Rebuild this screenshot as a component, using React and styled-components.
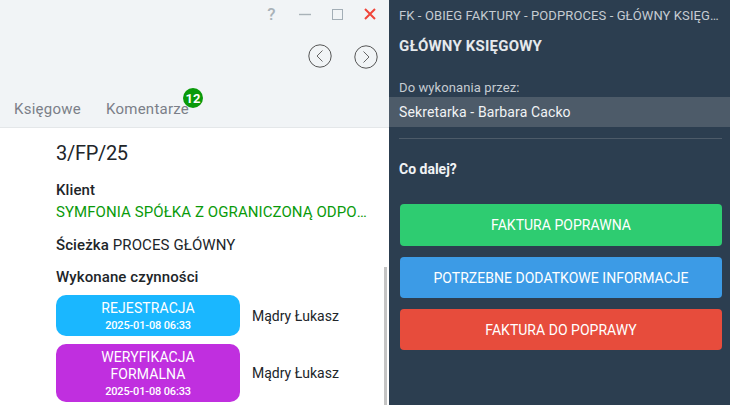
import React from 'react'
import styled, { createGlobalStyle } from 'styled-components'

const Global = createGlobalStyle`
  html, body { margin: 0; padding: 0; }
  body { font-family: Roboto, "Liberation Sans", sans-serif; }
`

const Page = styled.div`
  width: 730px;
  height: 405px;
  display: flex;
  overflow: hidden;
  background: #fff;
`
const Left = styled.div`
  width: 389px;
  flex: none;
  display: flex;
  flex-direction: column;
`
const Header = styled.div`
  height: 128px;
  box-sizing: border-box;
  flex: none;
  background: #f1f4f6;
  border-bottom: 1px solid #e4e7e9;
  display: flex;
  flex-direction: column;
`
const WindowBar = styled.div`
  height: 28px;
  display: flex;
  align-items: center;
  justify-content: flex-end;
  padding-right: 13px;
  gap: 21px;
`
const Help = styled.span`
  font-size: 17px;
  font-weight: 500;
  color: #a9b2b8;
  width: 9px;
  text-align: center;
  margin-right: 2px;
`
const NavRow = styled.div`
  height: 30px;
  margin-top: 13px;
  display: flex;
  align-items: center;
  justify-content: flex-end;
  gap: 22px;
  padding-right: 11px;
`
const Tabs = styled.div`
  display: flex;
  gap: 25px;
  padding: 29px 0 0 14px;
  position: relative;
`
const Tab = styled.div`
  font-size: 15px;
  letter-spacing: 0.25px;
  color: #7b7f88;
  position: relative;
`
const Badge = styled.span`
  position: absolute;
  right: -14px;
  top: -12px;
  width: 20px;
  height: 20px;
  border-radius: 50%;
  background: #0a9a0a;
  color: #fff;
  font-size: 13px;
  font-weight: 700;
  letter-spacing: 0;
  display: flex;
  align-items: center;
  justify-content: center;
`
const Body = styled.div`
  flex: 1;
  position: relative;
  padding: 13px 20px 0 56px;
  color: #212529;
  overflow: hidden;
`
const Title = styled.div`
  font-size: 20px;
  line-height: 24px;
  letter-spacing: -0.3px;
`
const Label = styled.div`
  font-size: 15px;
  font-weight: 500;
  letter-spacing: 0.1px;
  line-height: 20px;
  margin-top: ${p => p.$top}px;
`
const ClientName = styled.div`
  font-size: 15px;
  letter-spacing: 0.08px;
  line-height: 20px;
  color: #0a9a0a;
  white-space: nowrap;
  overflow: hidden;
  text-overflow: ellipsis;
  width: 314px;
  margin-top: 2px;
`
const PathRow = styled.div`
  font-size: 15px;
  letter-spacing: 0.1px;
  line-height: 20px;
  margin-top: 13px;
`
const PathLabel = styled.span`
  font-weight: 500;
`
const ActivityRow = styled.div`
  display: flex;
  align-items: center;
  gap: 12px;
  margin-top: ${p => p.$top}px;
`
const ActivityCard = styled.div`
  width: 184px;
  box-sizing: border-box;
  padding: 5px 6px 2px;
  border-radius: 10px;
  background: ${p => p.$color};
  color: #fff;
  text-align: center;
  font-size: 14px;
  letter-spacing: 0.1px;
  line-height: 17px;
`
const ActivityDate = styled.div`
  font-size: 11px;
  font-weight: 500;
  letter-spacing: -0.15px;
  line-height: 17px;
`
const ActivityUser = styled.div`
  font-size: 14px;
`
const Scrollbar = styled.div`
  position: absolute;
  right: 2px;
  top: 139px;
  bottom: 0;
  width: 3px;
  background: #c4c4c4;
`
const Right = styled.div`
  flex: 1;
  min-width: 0;
  background: #2c3e50;
  color: #fff;
  display: flex;
  flex-direction: column;
`
const Breadcrumb = styled.div`
  font-size: 13px;
  line-height: 16px;
  letter-spacing: 0.1px;
  color: #c6ccd2;
  padding: 8px 10px 0 10px;
  white-space: nowrap;
  overflow: hidden;
  text-overflow: ellipsis;
`
const StepName = styled.div`
  font-size: 15px;
  font-weight: 700;
  letter-spacing: 0.2px;
  color: #e6e9ec;
  line-height: 18px;
  padding: 13px 10px 0;
`
const PerformerLabel = styled.div`
  font-size: 13px;
  letter-spacing: 0.1px;
  line-height: 18px;
  color: #c6ccd2;
  padding: 24px 10px 0;
`
const Performer = styled.div`
  font-size: 14px;
  letter-spacing: 0.12px;
  line-height: 30px;
  color: #f1f3f5;
  background: #4d5b69;
  padding: 0 10px;
`
const Divider = styled.div`
  height: 1px;
  background: #4d5b69;
  margin: 11px 8px 0 10px;
`
const NextLabel = styled.div`
  font-size: 14px;
  font-weight: 700;
  line-height: 18px;
  color: #f1f3f5;
  padding: 21px 10px 0;
`
const Actions = styled.div`
  display: flex;
  flex-direction: column;
  gap: 11px;
  padding: 26px 8px 0 11px;
`
const ActionButton = styled.div`
  height: ${p => p.$height}px;
  border-radius: 4px;
  background: ${p => p.$color};
  display: flex;
  align-items: center;
  justify-content: center;
  font-size: 14px;
  letter-spacing: 0.03px;
  color: #fff;
`
const ArrowIcon = styled.svg`
  margin-top: ${p => p.$shift}px;
`

const Minimize = () => (
  <svg width="12" height="12" viewBox="0 0 12 12"><path d="M0 6.5h12" stroke="#a9b2b8" strokeWidth="1.4" /></svg>
)
const Maximize = () => (
  <svg width="11" height="11" viewBox="0 0 11 11"><rect x="0.5" y="0.5" width="10" height="10" fill="none" stroke="#a3aeb6" /></svg>
)
const Close = () => (
  <svg width="12" height="12" viewBox="0 0 12 12"><path d="M1 1l10 10M11 1L1 11" stroke="#f0453a" strokeWidth="2" /></svg>
)
const Arrow = ({ dir, shift }) => (
  <ArrowIcon $shift={shift} width="24" height="24" viewBox="0 0 24 24">
    <circle cx="12" cy="12" r="11.2" fill="none" stroke="#555" strokeWidth="1" />
    <path d={dir === 'left' ? 'M14.5 6.5l-5.5 5.5 5.5 5.5' : 'M9.5 6.5l5.5 5.5-5.5 5.5'} fill="none" stroke="#666" strokeWidth="1" />
  </ArrowIcon>
)

const activities = [
  { name: ['REJESTRACJA'], color: '#1ab7ff', top: 8 },
  { name: ['WERYFIKACJA', 'FORMALNA'], color: '#c02fdf', top: 8 },
]
const buttons = [
  ['FAKTURA POPRAWNA', '#2ecc71', 42],
  ['POTRZEBNE DODATKOWE INFORMACJE', '#3c9be6', 41],
  ['FAKTURA DO POPRAWY', '#e74c3c', 41],
]

const App = () => (
  <Page>
    <Global />
    <Left>
      <Header>
        <WindowBar>
          <Help>?</Help>
          <Minimize />
          <Maximize />
          <Close />
        </WindowBar>
        <NavRow>
          <Arrow dir="left" shift={0} />
          <Arrow dir="right" shift={2} />
        </NavRow>
        <Tabs>
          <Tab>Księgowe</Tab>
          <Tab>Komentarze<Badge>12</Badge></Tab>
        </Tabs>
      </Header>
      <Body>
        <Title>3/FP/25</Title>
        <Label $top={15}>Klient</Label>
        <ClientName>SYMFONIA SPÓŁKA Z OGRANICZONĄ ODPOWIEDZIALNOŚCIĄ</ClientName>
        <PathRow><PathLabel>Ścieżka</PathLabel> PROCES GŁÓWNY</PathRow>
        <Label $top={12}>Wykonane czynności</Label>
        {activities.map(a => (
          <ActivityRow key={a.name[0]} $top={a.top}>
            <ActivityCard $color={a.color}>
              {a.name.map(line => <div key={line}>{line}</div>)}
              <ActivityDate>2025-01-08 06:33</ActivityDate>
            </ActivityCard>
            <ActivityUser>Mądry Łukasz</ActivityUser>
          </ActivityRow>
        ))}
        <Scrollbar />
      </Body>
    </Left>
    <Right>
      <Breadcrumb>FK - OBIEG FAKTURY - PODPROCES - GŁÓWNY KSIĘGOWY</Breadcrumb>
      <StepName>GŁÓWNY KSIĘGOWY</StepName>
      <PerformerLabel>Do wykonania przez:</PerformerLabel>
      <Performer>Sekretarka - Barbara Cacko</Performer>
      <Divider />
      <NextLabel>Co dalej?</NextLabel>
      <Actions>
        {buttons.map(([label, color, height]) => (
          <ActionButton key={label} $color={color} $height={height}>{label}</ActionButton>
        ))}
      </Actions>
    </Right>
  </Page>
)

export default App
